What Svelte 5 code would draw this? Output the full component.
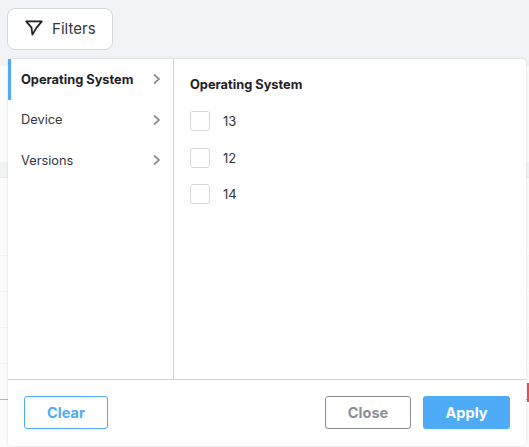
<script>
    let categories = ['Operating System', 'Device', 'Versions'];
    let active = 'Operating System';
    let options = ['13', '12', '14'];
</script>

<div class="page">
    <div class="toolbar">
        <button class="filter-btn">
            <svg width="18" height="17" viewBox="0 0 18 17" fill="none" stroke="#1f2126" stroke-width="1.8" stroke-linejoin="round" stroke-linecap="round">
                <path d="M1.2 1.4h15.6l-5.2 6.2-4.2 7-0.9-7z" />
            </svg>
            Filters
        </button>
    </div>

    <div class="table">
        <div class="head"></div>
        <div class="row first"></div>
        <div class="row"></div>
        <div class="row"></div>
        <div class="row"></div>
        <div class="row dark"></div>
        <span class="flag"></span>
    </div>

    <div class="panel">
        <div class="body">
            <ul class="side">
                {#each categories as c}
                    <li class:active={c === active}>
                        <span>{c}</span>
                        <svg width="8" height="12" viewBox="0 0 8 12" fill="none" stroke="#8b8e94" stroke-width="1.7">
                            <path d="M1 1.5l5 4.5-5 4.5" />
                        </svg>
                    </li>
                {/each}
            </ul>
            <div class="content">
                <h4>{active}</h4>
                {#each options as o}
                    <label class="opt">
                        <span class="box"></span>
                        {o}
                    </label>
                {/each}
            </div>
        </div>
        <div class="footer">
            <button class="btn clear">Clear</button>
            <div class="right">
                <button class="btn close">Close</button>
                <button class="btn apply">Apply</button>
            </div>
        </div>
    </div>
</div>

<style>
    :global(body) {
        margin: 0;
        font-family: Inter, "Liberation Sans", sans-serif;
    }

    .page {
        position: relative;
        width: 529px;
        height: 447px;
        background-color: #f2f3f6;
        overflow: hidden;
    }

    .toolbar {
        padding: 8px 0 0 7px;
        height: 58px;
        box-sizing: border-box;
    }

    .filter-btn {
        display: flex;
        align-items: center;
        gap: 9px;
        width: 106px;
        height: 42px;
        padding: 0 0 1px 17px;
        box-sizing: border-box;
        background-color: #ffffff;
        border: 1px solid #d5d7dc;
        border-radius: 8px;
        font-family: Inter, sans-serif;
        font-size: 15px;
        letter-spacing: 0.05px;
        color: #33363b;
    }

    .table {
        background-color: #fcfcfd;
        height: 389px;
        margin-top: 8px;
    }

    .head {
        height: 16px;
        box-sizing: border-box;
        background-color: #f2f3f5;
        border-bottom: 1px solid #e6e7ea;
        position: relative;
        top: 96px;
    }

    .row {
        height: 36px;
        box-sizing: border-box;
        border-bottom: 1px solid #f5f5f7;
    }

    .row.first {
        margin-top: 96px;
        height: 78px;
    }

    .row.dark {
        border-bottom: 1px solid #b5b6b8;
    }

    .flag {
        position: absolute;
        right: 0;
        top: 383px;
        width: 2px;
        height: 19px;
        background-color: #e8504f;
    }

    .panel {
        position: absolute;
        left: 8px;
        top: 59px;
        width: 518px;
        height: 387px;
        display: flex;
        flex-direction: column;
        background-color: #ffffff;
        border-radius: 4px;
        box-shadow: 0 0 3px rgba(0, 0, 0, 0.14);
    }

    .body {
        flex: 1;
        display: flex;
        min-height: 0;
    }

    .side {
        list-style: none;
        margin: 0;
        padding: 0;
        width: 165px;
        border-right: 1px solid #d0d2d6;
    }

    .side li {
        display: flex;
        align-items: center;
        justify-content: space-between;
        height: 40.5px;
        padding: 0 12px 0 10px;
        font-size: 12.8px;
        color: #33363b;
        border-left: 3px solid transparent;
    }

    .side li.active {
        border-left-color: #4dabf7;
        font-weight: 700;
        color: #1f2126;
    }

    .content {
        padding: 18px 16px;
    }

    h4 {
        margin: 0 0 18px;
        font-size: 12.8px;
        line-height: 16px;
        font-weight: 700;
        color: #1f2126;
    }

    .opt {
        display: flex;
        align-items: center;
        gap: 13px;
        height: 20px;
        margin-bottom: 16.5px;
        font-size: 13px;
        color: #33363b;
    }

    .box {
        width: 18px;
        height: 18px;
        border: 1px solid #d5d7dc;
        border-radius: 3px;
    }

    .footer {
        height: 67px;
        flex-shrink: 0;
        box-sizing: border-box;
        border-top: 1px solid #d0d2d6;
        display: flex;
        justify-content: space-between;
        padding: 16px 16px 0 16px;
    }

    .right {
        display: flex;
        gap: 12px;
    }

    .btn {
        height: 33px;
        border-radius: 3px;
        font-family: Inter, sans-serif;
        font-size: 14.5px;
        font-weight: 700;
        box-sizing: border-box;
        background-color: #ffffff;
    }

    .clear {
        width: 84px;
        border: 1px solid #4dabf7;
        color: #4dabf7;
    }

    .close {
        width: 86px;
        border: 1px solid #8b8e94;
        color: #8b8e94;
    }

    .apply {
        width: 87px;
        border: none;
        background-color: #4dabf7;
        color: #ffffff;
    }
</style>
